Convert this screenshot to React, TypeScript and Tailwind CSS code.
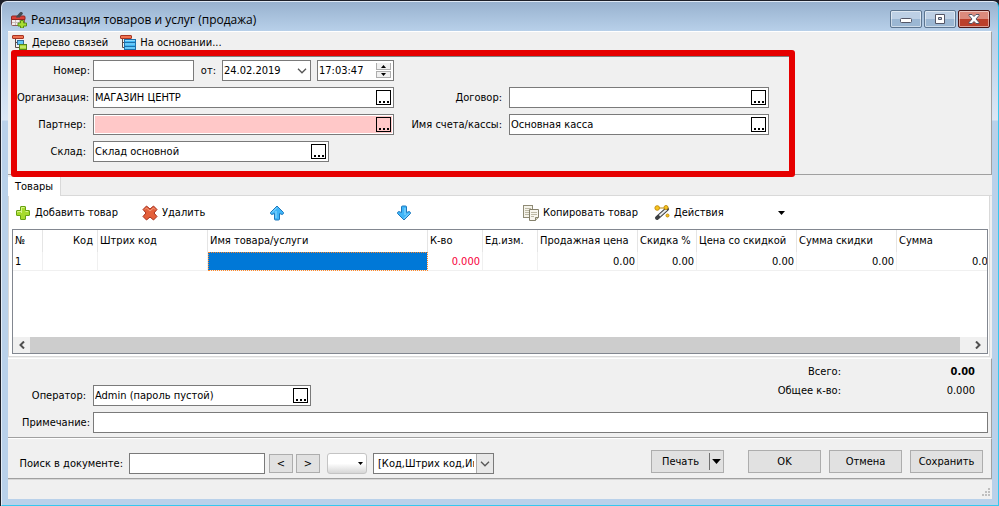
import type { ReactNode } from "react";
import clsx from "clsx";

type Column = {
  title: string;
  value: string;
  width: string;
  right?: boolean;
};

const columns: Column[] = [
  { title: "№", value: "1", width: "w-[30px]" },
  { title: "Код", value: "", width: "w-[55px]", right: true },
  { title: "Штрих код", value: "", width: "w-[110px]" },
  { title: "Имя товара/услуги", value: "", width: "w-[220px]" },
  { title: "К-во", value: "0.000", width: "w-[55px]" },
  { title: "Ед.изм.", value: "", width: "w-[55px]" },
  { title: "Продажная цена", value: "0.00", width: "w-[100px]" },
  { title: "Скидка %", value: "0.00", width: "w-[59px]" },
  { title: "Цена со скидкой", value: "0.00", width: "w-[100px]" },
  { title: "Сумма скидки", value: "0.00", width: "w-[100px]" },
  { title: "Сумма", value: "0.00", width: "w-[100px]" },
];

function DocumentIcon() {
  return (
    <svg width="16" height="16" viewBox="0 0 16 16" aria-hidden="true">
      <rect x="0.5" y="4.5" width="13" height="9" rx="1" fill="#f4efef" stroke="#8c5a58" />
      <path d="M0.5 7.5V5a1 1 0 0 1 1-1H13a1 1 0 0 1 1 1v2.5z" fill="#dc4038" stroke="#92261f" />
      <path d="M1 10.5h12M4.5 8v5M8.5 8v5" stroke="#c9b9b9" />
      <path d="M5.5 5.5 9 1.5q1.500-1.500 2 0L7.500 5.500" fill="none" stroke="#454b52" strokeWidth="1.700" />
      <path d="M9.500 8.500h3v2.500h3v3h-3v2h-3v-2h-2.500v-3h2.500z" fill="#a8dd32" stroke="#598f16" />
    </svg>
  );
}

function TreeIcon() {
  return (
    <svg width="16" height="16" viewBox="0 0 16 16" aria-hidden="true">
      <path d="M3.500 4v8.500H8M3.500 7.500H6" fill="none" stroke="#5b4b48" />
      <rect x="0.5" y="0.5" width="11" height="3" rx="0.5" fill="#ef7351" stroke="#a83422" />
      <rect x="5.5" y="5.500" width="6" height="4" fill="#62c6f6" stroke="#326a98" />
      <rect x="7.5" y="9.500" width="7" height="5" fill="#a7d733" stroke="#56851c" />
      <path d="M8 12h6" stroke="#d9f39a" />
    </svg>
  );
}

function BasedOnIcon() {
  return (
    <svg width="16" height="16" viewBox="0 0 16 16" aria-hidden="true">
      <path d="M2.500 4v8.500H5M2.500 7.500H5" fill="none" stroke="#5b4b48" />
      <rect x="0.5" y="0.5" width="11" height="3" rx="0.5" fill="#ef7351" stroke="#a83422" />
      <rect x="4.500" y="4.500" width="11" height="10" fill="#3fb4f3" stroke="#1d70ac" />
      <path d="M5 7.500h10M5 11.500h10" stroke="#1d70ac" />
      <path d="M5 5.500h10M5 9h10M5 13h10" stroke="#8fdcff" />
    </svg>
  );
}

function AddIcon() {
  return (
    <svg width="16" height="16" viewBox="0 0 16 16" aria-hidden="true">
      <path
        d="M6 1.500h4q.5 0 .5.5v3.500H14q.5 0 .5.5v4q0 .5-.5.5h-3.500V14q0 .5-.5.5H6q-.5 0-.5-.5v-3.500H2q-.5 0-.5-.5V6q0-.5.5-.5h3.500V2q0-.5.5-.5z"
        fill="#a6db2c"
        stroke="#67a112"
      />
      <path d="M6.500 8V2.500h3M2.500 7.500v-1H6M10.500 6.500H13" fill="none" stroke="#d8f48c" />
    </svg>
  );
}

function DeleteIcon() {
  return (
    <svg width="16" height="16" viewBox="0 0 16 16" aria-hidden="true">
      <path
        d="M4.500 1 8 4l3.500-3L15 4.500 12 8l3 3.500-3.500 3.500L8 12l-3.500 3L1 11.500 4 8 1 4.500z"
        fill="#e4603b"
        stroke="#a52f1c"
        strokeLinejoin="round"
      />
      <path d="M3 4.500 4.500 3 8 6l3.500-3L13 4.500" fill="none" stroke="#f4a284" />
    </svg>
  );
}

function ArrowIcon({ down }: { down?: boolean }) {
  return (
    <svg width="16" height="16" viewBox="0 0 16 16" aria-hidden="true" className={clsx(down && "rotate-180")}>
      <path
        d="M8 1 14.500 7.500q.3 1.500-1.300 2l-2.700-1V14q0 1-1 1h-3q-1 0-1-1V8.500l-2.700 1q-1.600-.5-1.300-2z"
        fill="#3fb5f8"
        stroke="#1c78bd"
        strokeLinejoin="round"
      />
      <path d="M3 7.500 8 2.500M7 6v7" fill="none" stroke="#96ddff" />
    </svg>
  );
}

function CopyIcon() {
  return (
    <svg width="16" height="16" viewBox="0 0 16 16" aria-hidden="true">
      <rect x="0.5" y="0.5" width="9" height="12" fill="#f5f3ea" stroke="#8f8b76" />
      <path d="M2 3.500h6M2 5.500h6M2 7.500h4M2 9.500h4" stroke="#bdb9a5" />
      <path d="M6.500 4.500h9v8l-3 3h-6z" fill="#f8f6ee" stroke="#85816c" />
      <path d="M8 7.500h6M8 9.500h6M8 11.500h3" stroke="#bdb9a5" />
      <path d="M15.500 12.500h-3v3" fill="#d8d4bd" stroke="#85816c" />
    </svg>
  );
}

function ActionsIcon() {
  return (
    <svg width="16" height="16" viewBox="0 0 16 16" aria-hidden="true">
      <path d="M3.500 3H12" stroke="#b8860e" />
      <path d="M3 13 13 4" stroke="#3c3f43" strokeWidth="4" strokeLinecap="round" />
      <path d="M5.500 10.700 12.500 4.500" stroke="#e8eaec" strokeWidth="2" />
      <circle cx="3.200" cy="3" r="2.300" fill="#f8c51d" stroke="#c48f12" />
      <circle cx="12" cy="2.500" r="2" fill="#f8c51d" stroke="#c48f12" />
      <circle cx="13.500" cy="10.500" r="1.500" fill="#f8c51d" stroke="#c48f12" />
    </svg>
  );
}

function Chevron() {
  return (
    <svg width="10" height="6" viewBox="0 0 10 6" aria-hidden="true">
      <path d="M1 0.800 5 4.800 9 0.800" fill="none" stroke="#555" strokeWidth="1.300" />
    </svg>
  );
}

function Triangle({ className }: { className?: string }) {
  return (
    <svg width="7" height="4" viewBox="0 0 7 4" aria-hidden="true" className={className}>
      <path d="M0 0h7L3.500 4z" fill="#000" />
    </svg>
  );
}

function LookupButton({ label }: { label: string }) {
  return (
    <button
      type="button"
      aria-label={label}
      className="mr-px flex h-[15px] w-[15px] shrink-0 items-end justify-center gap-0.5 border border-black pb-px"
    >
      <span className="h-0.5 w-0.5 bg-black" />
      <span className="h-0.5 w-0.5 bg-black" />
      <span className="h-0.5 w-0.5 bg-black" />
    </button>
  );
}

type FieldProps = {
  id: string;
  label: string;
  value?: string;
  labelWidth: string;
  width: string;
  required?: boolean;
};

function LookupField({ id, label, value = "", labelWidth, width, required }: FieldProps) {
  return (
    <div className="flex items-center">
      <label htmlFor={id} className={clsx("shrink-0 pr-[7px] text-right", labelWidth)}>
        {label}
      </label>
      <div className={clsx("flex h-[21px] items-center border border-[#7a7a7a] bg-white p-px", width)}>
        <div className={clsx("flex h-full min-w-0 flex-1 items-center", required && "bg-[#ffc8c8]")}>
          <input id={id} defaultValue={value} className="h-full min-w-0 flex-1 outline-none" />
          <LookupButton label={`Выбрать: ${label}`} />
        </div>
      </div>
    </div>
  );
}

function ToolButton({ icon, children, className }: { icon: ReactNode; children?: ReactNode; className?: string }) {
  return (
    <button type="button" className={clsx("flex shrink-0 items-center gap-1 whitespace-nowrap", className)}>
      {icon}
      {children}
    </button>
  );
}

function PushButton({ children, className }: { children: ReactNode; className?: string }) {
  return (
    <button
      type="button"
      className={clsx("flex items-center justify-center border border-[#adadad] bg-[#e1e1e1]", className)}
    >
      {children}
    </button>
  );
}

function TitleBar() {
  const button =
    "flex h-[18px] w-8 items-center justify-center rounded-[2px] border shadow-[inset_0_0_0_1px_rgba(255,255,255,0.5)]";
  const plain = "border-[#5c7590] bg-linear-to-b from-[#bdd0e5] from-50% to-[#9bb7d3] to-50%";
  return (
    <header className="flex h-[29px] shrink-0 items-start pt-2 pr-2 pl-[9px]">
      <div className="flex items-center gap-1 pt-0.5">
        <DocumentIcon />
        <h1 className="font-[Open_Sans,sans-serif] text-[12px] leading-4">Реализация товаров и услуг (продажа)</h1>
      </div>
      <div className="ml-auto flex gap-0.5">
        <button type="button" aria-label="Свернуть" className={clsx(button, plain)}>
          <svg width="12" height="10" viewBox="0 0 12 10">
            <rect x="0.5" y="4.500" width="11" height="4" rx="1" fill="#fff" stroke="#535666" />
          </svg>
        </button>
        <button type="button" aria-label="Развернуть" className={clsx(button, plain)}>
          <svg width="12" height="10" viewBox="0 0 12 10">
            <path d="M1.500 0.500h9v9h-9zM4.500 3.500v2h3v-2z" fill="#fff" fillRule="evenodd" stroke="#535666" />
          </svg>
        </button>
        <button
          type="button"
          aria-label="Закрыть"
          className={clsx(button, "border-[#4b1515] bg-linear-to-b from-[#dc8a7c] from-50% to-[#bb3f2a] to-50%")}
        >
          <svg width="12" height="10" viewBox="0 0 12 10">
            <path
              d="M1 0.500h3l2 2 2-2h3v1L8 5l3 3.500v1H8l-2-2-2 2H1v-1L4 5 1 1.500z"
              fill="#fff"
              stroke="#535666"
              strokeLinejoin="round"
            />
          </svg>
        </button>
      </div>
    </header>
  );
}

function DocumentForm() {
  return (
    <form
      className="relative z-10 -mb-[3px] ml-[3px] w-[784px] rounded-[3px] border-6 border-[#e60000]"
      onSubmit={(e) => e.preventDefault()}
    >
      <div className="flex flex-col gap-1.5 border-t border-[#808080] pt-[3px] pb-[9px]">
        <div className="flex items-center">
          <label htmlFor="number" className="w-[76px] shrink-0 pr-[3px] text-right">
            Номер:
          </label>
          <input id="number" className="h-[21px] w-[101px] border border-[#7a7a7a] bg-white px-0.5 outline-none" />
          <label htmlFor="date" className="w-7 pr-1.5 text-right">
            от:
          </label>
          <div className="flex h-[21px] w-[89px] items-center border border-[#7a7a7a] bg-white">
            <input id="date" defaultValue="24.02.2019" className="min-w-0 flex-1 pl-px outline-none" />
            <button type="button" aria-label="Календарь" className="flex w-4 justify-center">
              <Chevron />
            </button>
          </div>
          <div className="ml-1.5 flex h-[21px] w-[77px] items-center border border-[#7a7a7a] bg-white pr-0.5">
            <input aria-label="Время" defaultValue="17:03:47" className="min-w-0 flex-1 pl-px outline-none" />
            <div className="flex flex-col gap-px">
              <button
                type="button"
                aria-label="Больше"
                className="flex h-[7px] w-[15px] items-center justify-center border-x border-b border-[#adadad] bg-[#f0f0f0]"
              >
                <Triangle className="h-[3px] w-[5px] rotate-180" />
              </button>
              <button
                type="button"
                aria-label="Меньше"
                className="flex h-[7px] w-[15px] items-center justify-center border border-[#adadad] bg-[#f0f0f0]"
              >
                <Triangle className="h-[3px] w-[5px]" />
              </button>
            </div>
          </div>
        </div>
        <div className="flex">
          <LookupField id="org" label="Организация:" value="МАГАЗИН ЦЕНТР" labelWidth="w-[76px]" width="w-[301px]" />
          <LookupField id="contract" label="Договор:" labelWidth="w-[115px]" width="w-[260px]" />
        </div>
        <div className="flex">
          <LookupField id="partner" label="Партнер:" labelWidth="w-[76px]" width="w-[301px]" required />
          <LookupField
            id="account"
            label="Имя счета/кассы:"
            value="Основная касса"
            labelWidth="w-[115px]"
            width="w-[260px]"
          />
        </div>
        <LookupField id="store" label="Склад:" value="Склад основной" labelWidth="w-[76px]" width="w-[236px]" />
      </div>
    </form>
  );
}

function GoodsTable() {
  return (
    <div className="mr-px mb-0.5 ml-[3px] flex min-h-[124px] flex-1 flex-col overflow-hidden border border-[#828790]">
      <div className="flex-1 overflow-hidden">
        <table className="w-[984px] table-fixed border-separate border-spacing-0">
          <thead>
            <tr>
              {columns.map((c) => (
                <th
                  key={c.title}
                  scope="col"
                  className={clsx(
                    "h-[22px] overflow-hidden border-r border-[#e5e5e5] px-0.5 font-normal whitespace-nowrap",
                    c.width,
                    c.right ? "pr-1 text-right" : "text-left",
                  )}
                >
                  {c.title}
                </th>
              ))}
            </tr>
          </thead>
          <tbody>
            <tr>
              {columns.map((c, i) => (
                <td
                  key={c.title}
                  className={clsx(
                    "h-[19px] border-r border-b border-[#f0f0f0] pt-0.5",
                    i === 0 ? "pl-0.5" : "pr-0.5 text-right",
                    c.title === "К-во" && "text-[#f8003c]",
                    c.title === "Имя товара/услуги" &&
                      "bg-[#0078d7] outline-1 -outline-offset-1 outline-dotted outline-[#ff8728]",
                  )}
                >
                  {c.value}
                </td>
              ))}
            </tr>
          </tbody>
        </table>
      </div>
      <div className="flex h-4 shrink-0 bg-[#f0f0f0]">
        <button type="button" aria-label="Влево" className="flex w-[17px] items-center justify-center">
          <svg width="6" height="8" viewBox="0 0 6 8">
            <path d="M5 0.500 1.500 4 5 7.500" fill="none" stroke="#505050" strokeWidth="2" />
          </svg>
        </button>
        <div className="flex-1 bg-[#cdcdcd]" />
        <button type="button" aria-label="Вправо" className="flex w-[27px] items-center justify-end pr-1.5">
          <svg width="6" height="8" viewBox="0 0 6 8">
            <path d="M1 0.500 4.500 4 1 7.500" fill="none" stroke="#505050" strokeWidth="2" />
          </svg>
        </button>
      </div>
    </div>
  );
}

function Footer() {
  return (
    <section className="shrink-0 border-t border-r border-b border-t-white border-r-[#a0a0a0] border-b-[#a0a0a0] pt-[5px] pb-1">
      <div className="flex items-end">
        <LookupField
          id="operator"
          label="Оператор:"
          value="Admin (пароль пустой)"
          labelWidth="w-[85px]"
          width="w-[218px]"
        />
        <dl className="mr-4 mb-[7px] ml-auto grid grid-cols-[auto_134px] gap-y-[3px] text-right leading-4">
          <dt>Всего:</dt>
          <dd className="font-bold">0.00</dd>
          <dt>Общее к-во:</dt>
          <dd>0.000</dd>
        </dl>
      </div>
      <div className="mt-1.5 flex items-center pr-[3px]">
        <label htmlFor="note" className="w-[85px] shrink-0 pr-[3px] text-right">
          Примечание:
        </label>
        <input
          id="note"
          className="h-[21px] min-w-0 flex-1 border border-[#7a7a7a] bg-white px-0.5 outline-none"
        />
      </div>
    </section>
  );
}

function BottomBar() {
  return (
    <section className="flex shrink-0 items-start border-t border-r border-b border-t-white border-r-[#a0a0a0] border-b-[#a0a0a0] pt-[11px] pr-2 pb-1">
      <div className="flex items-center pt-[3px]">
        <label htmlFor="search" className="w-[121px] shrink-0 pr-1.5 text-right">
          Поиск в документе:
        </label>
        <input id="search" className="h-[21px] w-[136px] border border-[#7a7a7a] bg-white px-0.5 outline-none" />
        <PushButton className="ml-1 h-[19px] w-6">&lt;</PushButton>
        <PushButton className="ml-[3px] h-[19px] w-6">&gt;</PushButton>
        <button
          type="button"
          aria-label="Параметры поиска"
          className="ml-[7px] flex h-[21px] w-10 items-center justify-end rounded-[3px] border border-[#c4c4c4] bg-linear-to-b from-white from-50% to-[#d6d6d6] pr-[3px]"
        >
          <Triangle className="h-[3px] w-[5px]" />
        </button>
        <div className="relative ml-1.5">
          <select
            aria-label="Поля поиска"
            className="h-[21px] w-[121px] appearance-none overflow-hidden border border-[#7a7a7a] bg-white pr-[19px] pl-1 outline-none"
          >
            <option>[Код,Штрих код,Имя товара]</option>
          </select>
          <span className="pointer-events-none absolute inset-y-px right-px flex w-[17px] items-center justify-center border-l border-[#adadad] bg-[#e8e8e8]">
            <Chevron />
          </span>
        </div>
      </div>
      <div className="ml-auto flex gap-2">
        <div className="mr-4 flex h-[23px] w-[73px] border border-[#adadad] bg-[#e1e1e1]">
          <button type="button" className="min-w-0 flex-1">
            Печать
          </button>
          <button
            type="button"
            aria-label="Варианты печати"
            className="my-0.5 flex w-3.5 items-center justify-center border-l border-[#707070]"
          >
            <Triangle className="h-[5px] w-[9px]" />
          </button>
        </div>
        <PushButton className="h-[23px] w-[73px]">OK</PushButton>
        <PushButton className="h-[23px] w-[73px]">Отмена</PushButton>
        <PushButton className="h-[23px] w-[73px]">Сохранить</PushButton>
      </div>
    </section>
  );
}

export default function App() {
  return (
    <div className="flex min-h-screen flex-col bg-[#1d2029] pt-px pl-px font-['DejaVu_Sans_Condensed','DejaVu_Sans',sans-serif] text-[11px] leading-4 text-black">
      <div className="flex flex-1 flex-col rounded-t-md border border-t-[#dfe9f5] border-r-[#35c8ef] border-b-[#35c8ef] border-l-[#e4edf7] bg-[linear-gradient(180deg,#98b2cf_0px,#b9d1ea_30px,#b9d1ea_40px,#dbe7f5_118px,#b9d1ea_119px)]">
        <TitleBar />
        <main className="mx-1.5 mb-1.5 flex min-w-0 flex-1 flex-col bg-[#f0f0f0]">
          <div className="shrink-0 border-t border-r border-b border-t-white border-r-[#a0a0a0] border-b-[#a0a0a0]">
            <div className="flex h-[18px] items-start gap-3 pt-[3px] pl-1">
              <ToolButton icon={<TreeIcon />}>Дерево связей</ToolButton>
              <ToolButton icon={<BasedOnIcon />}>На основании...</ToolButton>
            </div>
            <DocumentForm />
          </div>

          <div className="flex shrink-0 items-end pt-0.5" role="tablist">
            <button type="button" role="tab" aria-selected className="h-[19px] w-[53px] border-r border-[#d9d9d9] bg-white">
              Товары
            </button>
            <div className="h-[19px] flex-1 border-b border-[#d9d9d9]" />
          </div>
          <div className="mr-0.5 mb-px flex flex-1 flex-col border-x border-b border-[#d9d9d9] bg-white">
            <div className="flex h-[33px] shrink-0 items-center pt-px pl-1.5">
              <ToolButton icon={<AddIcon />} className="w-[127px]">
                Добавить товар
              </ToolButton>
              <ToolButton icon={<DeleteIcon />} className="w-[127px]">
                Удалить
              </ToolButton>
              <ToolButton icon={<ArrowIcon />} className="w-[127px]" />
              <ToolButton icon={<ArrowIcon down />} className="w-[127px]" />
              <ToolButton icon={<CopyIcon />} className="w-[131px]">
                Копировать товар
              </ToolButton>
              <ToolButton icon={<ActionsIcon />} className="w-[131px]">
                Действия
                <Triangle className="ml-auto" />
              </ToolButton>
            </div>
            <GoodsTable />
          </div>

          <Footer />
          <BottomBar />
          <footer className="flex h-5 shrink-0 items-end justify-end border-t border-[#d7d7d7] p-0.5">
            <svg width="9" height="9" viewBox="0 0 9 9" aria-hidden="true">
              <path d="M7 0h2v2H7zM4 3h2v2H4zM7 3h2v2H7zM1 6h2v2H1zM4 6h2v2H4zM7 6h2v2H7z" fill="#bfbfbf" />
            </svg>
          </footer>
        </main>
      </div>
    </div>
  );
}
